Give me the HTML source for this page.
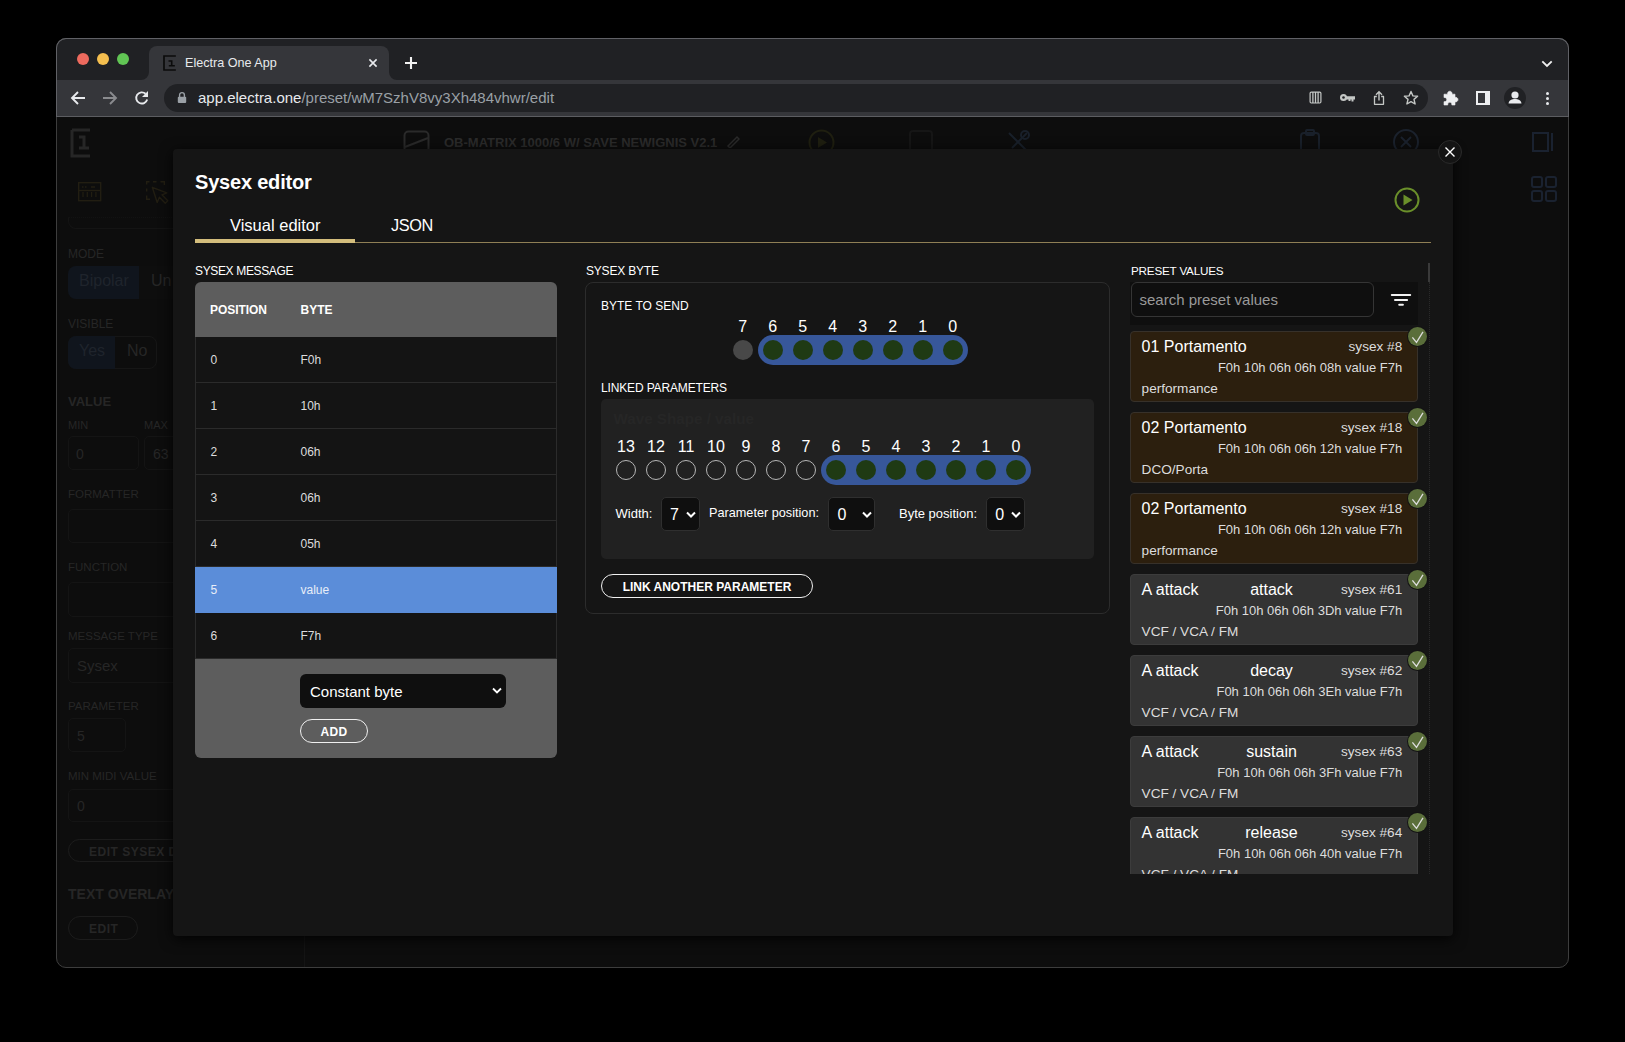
<!DOCTYPE html><html><head><meta charset="utf-8"><style>
html,body{margin:0;padding:0;}
body{width:1625px;height:1042px;background:#000;position:relative;overflow:hidden;font-family:"Liberation Sans", sans-serif;}
.t{position:absolute;line-height:1;white-space:nowrap;}
.r{position:absolute;box-sizing:border-box;}
</style></head><body>

<div class="r" style="left:56px;top:38px;width:1513px;height:930px;border-radius:10px;overflow:hidden;background:#0d0d0d;">
</div>
<div class="r" style="left:56px;top:38px;width:1513px;height:42px;background:#202124;border-radius:0px;border-radius:10px 10px 0 0;"></div>
<div class="r" style="left:56px;top:80px;width:1513px;height:36px;background:#35363a;border-radius:0px;"></div>
<div class="r" style="left:56px;top:116px;width:1513px;height:1px;background:#5c5d61;border-radius:0px;"></div>
<div class="r" style="left:149px;top:46px;width:240px;height:34px;background:#35363a;border-radius:0px;border-radius:8px 8px 0 0;"></div>
<svg class="r" style="left:141px;top:72px;" width="8" height="8" viewBox="0 0 8 8"><path d="M8 0 V8 H0 A8 8 0 0 0 8 0Z" fill="#35363a"/></svg>
<svg class="r" style="left:389px;top:72px;" width="8" height="8" viewBox="0 0 8 8"><path d="M0 0 V8 H8 A8 8 0 0 1 0 0Z" fill="#35363a"/></svg>
<div class="r" style="left:77px;top:53px;width:12px;height:12px;background:#ed6a5e;border-radius:6px;"></div>
<div class="r" style="left:97px;top:53px;width:12px;height:12px;background:#f5bf4f;border-radius:6px;"></div>
<div class="r" style="left:117px;top:53px;width:12px;height:12px;background:#61c554;border-radius:6px;"></div>
<svg class="r" style="left:163px;top:55px;" width="13" height="17" viewBox="0 0 13 17"><path d="M12 1 H1 V15 H12" stroke="#0b0b0b" stroke-width="1.7" fill="none" stroke-linecap="square"/><path d="M5.5 6 H8.7 V10.8 M5.8 10.8 H11.8" stroke="#0b0b0b" stroke-width="1.6" fill="none"/></svg>
<div class="t" style="left:185px;top:57.33px;font-size:12.6px;color:#e8eaed;font-weight:400;">Electra One App</div>
<svg class="r" style="left:367px;top:57px;" width="12" height="12" viewBox="0 0 12 12"><path d="M2.4 2.4 L9.6 9.6 M9.6 2.4 L2.4 9.6" stroke="#e8eaed" stroke-width="1.6"/></svg>
<svg class="r" style="left:404px;top:56.2px;" width="14" height="14" viewBox="0 0 14 14"><path d="M7 1 V13 M1 7 H13" stroke="#f2f2f2" stroke-width="2.1"/></svg>
<svg class="r" style="left:1540px;top:58.5px;" width="14" height="10" viewBox="0 0 14 10"><path d="M2.3 2.3 L7 7 L11.7 2.3" stroke="#f0f0f0" stroke-width="1.8" fill="none"/></svg>
<svg class="r" style="left:69px;top:89px;" width="18" height="18" viewBox="0 0 18 18"><path d="M16 9 H3 M9 3 L3 9 L9 15" stroke="#e8eaed" stroke-width="1.9" fill="none"/></svg>
<svg class="r" style="left:101px;top:89px;" width="18" height="18" viewBox="0 0 18 18"><path d="M2 9 H15 M9 3 L15 9 L9 15" stroke="#8a8b8e" stroke-width="1.9" fill="none"/></svg>
<svg class="r" style="left:133px;top:89px;" width="18" height="18" viewBox="0 0 18 18"><path d="M14.2 10.5 A5.6 5.6 0 1 1 12.6 4.8" stroke="#e8eaed" stroke-width="1.9" fill="none"/><path d="M15 2 V8 H9 Z" fill="#e8eaed"/></svg>
<div class="r" style="left:164px;top:84px;width:1264px;height:28px;background:#202124;border-radius:14px;"></div>
<svg class="r" style="left:177px;top:91px;" width="10" height="13" viewBox="0 0 10 13"><rect x="0.8" y="5.8" width="8.4" height="6.2" rx="1" fill="#9aa0a6"/><path d="M2.6 6 V4 A2.4 2.4 0 0 1 7.4 4 V6" stroke="#9aa0a6" stroke-width="1.4" fill="none"/></svg>
<div class="t" style="left:198px;top:90.30px;font-size:15px;color:#e8eaed;font-weight:400;"><span style="color:#e8eaed">app.electra.one</span><span style="color:#9aa0a6">/preset/wM7SzhV8vy3Xh484vhwr/edit</span></div>
<svg class="r" style="left:1308.5px;top:91.3px;" width="13" height="13" viewBox="0 0 13 13"><rect x="1.1" y="1.1" width="10.8" height="10.9" rx="1.2" stroke="#c4c7c5" stroke-width="1.2" fill="none"/><path d="M3.9 1 V12 M6.5 1 V12 M9.1 1 V12" stroke="#c4c7c5" stroke-width="1.3"/></svg>
<svg class="r" style="left:1339px;top:91px;" width="17" height="14" viewBox="0 0 17 14"><circle cx="4.5" cy="6.5" r="3.5" fill="#c4c7c5"/><circle cx="4.5" cy="6.5" r="1.3" fill="#202124"/><path d="M7 5.3 H16 V8.6 H14.5 V10.5 H12.5 V8.6 H11.5 V10 H9.5 V8.6 H7 Z" fill="#c4c7c5"/></svg>
<svg class="r" style="left:1372px;top:90px;" width="14" height="16" viewBox="0 0 14 16"><path d="M7 10.5 V2 M4 4.8 L7 1.8 L10 4.8" stroke="#c4c7c5" stroke-width="1.4" fill="none"/><path d="M4.8 6.5 H2.5 V14.3 H11.5 V6.5 H9.2" stroke="#c4c7c5" stroke-width="1.3" fill="none" stroke-linejoin="round"/></svg>
<svg class="r" style="left:1403px;top:90px;" width="16" height="16" viewBox="0 0 16 16"><path d="M8 1.5 L9.9 5.9 L14.6 6.3 L11 9.4 L12.1 14 L8 11.6 L3.9 14 L5 9.4 L1.4 6.3 L6.1 5.9 Z" stroke="#c4c7c5" stroke-width="1.4" fill="none" stroke-linejoin="round"/></svg>
<svg class="r" style="left:1442px;top:90px;" width="18" height="17" viewBox="0 0 18 17"><path d="M2 4.2 H5.6 A2.3 2.3 0 1 1 10 4.2 H13 V7.4 A2.3 2.3 0 1 1 13 11.8 V15 H9.8 A2.1 2.1 0 1 0 5.8 15 H2 V11.6 A2.1 2.1 0 1 0 2 7.6 Z" fill="#eeeff1" stroke="#eeeff1" stroke-width="0.6" stroke-linejoin="round"/></svg>
<svg class="r" style="left:1476px;top:91px;" width="14" height="14" viewBox="0 0 14 14"><rect x="1" y="1" width="12" height="12" stroke="#eeeff1" stroke-width="2" fill="none"/><rect x="9" y="1" width="4" height="12" fill="#eeeff1"/></svg>
<div class="r" style="left:1504px;top:87px;width:22px;height:22px;background:#202124;border-radius:11px;"></div>
<svg class="r" style="left:1504px;top:87px;" width="22" height="22" viewBox="0 0 22 22"><circle cx="11" cy="8" r="3.6" fill="#e8eaed"/><path d="M4.5 16.5 C5 13 8 12 11 12 C14 12 17 13 17.5 16.5 Z" fill="#e8eaed"/></svg>
<div class="r" style="left:1546px;top:91.9px;width:3.2px;height:3.2px;background:#e8eaed;border-radius:2px;"></div>
<div class="r" style="left:1546px;top:96.9px;width:3.2px;height:3.2px;background:#e8eaed;border-radius:2px;"></div>
<div class="r" style="left:1546px;top:101.9px;width:3.2px;height:3.2px;background:#e8eaed;border-radius:2px;"></div>
<div class="r" style="left:56px;top:117px;width:1513px;height:51px;background:#0d0d0d;border-radius:0px;"></div>
<div class="r" style="left:56px;top:168px;width:248px;height:1px;background:#131313;border-radius:0px;"></div>
<div class="r" style="left:56px;top:168px;width:1513px;height:799px;background:#0d0d0d;border-radius:0px;border-radius:0 0 10px 10px;"></div>
<div class="r" style="left:304px;top:168px;width:1px;height:799px;background:#141414;border-radius:0px;"></div>
<svg class="r" style="left:70px;top:128px;" width="22" height="30" viewBox="0 0 22 30"><path d="M2 2 H20 M2 2 V28 H20" stroke="#262626" stroke-width="3" fill="none"/><path d="M9 9 H14 V21 M9 20 H19" stroke="#262626" stroke-width="3" fill="none"/></svg>
<svg class="r" style="left:77px;top:181px;" width="26" height="22" viewBox="0 0 26 22"><rect x="1.7" y="1.7" width="22" height="18" stroke="#221e12" stroke-width="1.4" fill="none"/><path d="M1.7 9.5 H23.7" stroke="#221e12" stroke-width="1.4"/><path d="M6 11 V16 M10.3 11 V16 M14.6 11 V16 M18.9 11 V16" stroke="#221e12" stroke-width="1.2"/><path d="M5 6 H6.5 M8 6 H9.5 M14 6 H18" stroke="#221e12" stroke-width="1.3"/></svg>
<svg class="r" style="left:144px;top:179px;" width="28" height="28" viewBox="0 0 28 28"><path d="M5.5 2.7 H2.7 V5.5 M9 2.7 H12.5 M16.5 2.7 H20.3 V6 M2.7 9.5 V12.5 M2.7 16.5 V20.3 H6" stroke="#221e12" stroke-width="1.4" fill="none"/><path d="M8.3 8.3 L22.8 13.8 L18 15.8 L23.8 21.8 L21.3 24.2 L15.4 18.2 L13.2 23.5 Z" stroke="#221e12" stroke-width="1.4" fill="none" stroke-linejoin="round"/></svg>
<div class="r" style="left:68px;top:217px;width:236px;height:12px;background:none;border-radius:8px;border:1px solid #141414;border-top:1px dotted #121212;border-radius:0 0 8px 8px;"></div>
<div class="t" style="left:68px;top:247.84px;font-size:12px;color:#262626;font-weight:400;">MODE</div>
<div class="r" style="left:68px;top:266px;width:108px;height:33px;background:#10151d;border-radius:8px;"></div>
<div class="r" style="left:139px;top:266px;width:37px;height:33px;background:#0e0e0e;border-radius:0px;"></div>
<div class="t" style="left:79px;top:273.46px;font-size:16px;color:#1f242c;font-weight:400;">Bipolar</div>
<div class="t" style="left:151px;top:273.46px;font-size:16px;color:#262626;font-weight:400;">Un</div>
<div class="t" style="left:68px;top:317.84px;font-size:12px;color:#262626;font-weight:400;">VISIBLE</div>
<div class="r" style="left:68px;top:336px;width:89px;height:33px;background:none;border-radius:8px;border:1px solid #161616;"></div>
<div class="r" style="left:68px;top:336px;width:47px;height:33px;background:#10151d;border-radius:0px;border-radius:8px 0 0 8px;"></div>
<div class="t" style="left:79px;top:343.46px;font-size:16px;color:#1f242c;font-weight:400;">Yes</div>
<div class="t" style="left:127px;top:343.46px;font-size:16px;color:#262626;font-weight:400;">No</div>
<div class="t" style="left:68px;top:395.00px;font-size:13px;color:#262626;font-weight:700;">VALUE</div>
<div class="t" style="left:68px;top:419.69px;font-size:11px;color:#262626;font-weight:400;">MIN</div>
<div class="t" style="left:144px;top:419.69px;font-size:11px;color:#262626;font-weight:400;">MAX</div>
<div class="r" style="left:68px;top:436px;width:71px;height:34px;background:none;border-radius:5px;border:1px solid #141414;"></div>
<div class="r" style="left:144px;top:436px;width:40px;height:34px;background:none;border-radius:5px;border:1px solid #141414;"></div>
<div class="t" style="left:76px;top:447.15px;font-size:14px;color:#262626;font-weight:400;">0</div>
<div class="t" style="left:153px;top:447.15px;font-size:14px;color:#262626;font-weight:400;">63</div>
<div class="t" style="left:68px;top:489.27px;font-size:11.5px;color:#262626;font-weight:400;">FORMATTER</div>
<div class="r" style="left:68px;top:509px;width:120px;height:34px;background:none;border-radius:5px;border:1px solid #141414;"></div>
<div class="t" style="left:68px;top:562.27px;font-size:11.5px;color:#262626;font-weight:400;">FUNCTION</div>
<div class="r" style="left:68px;top:582px;width:120px;height:35px;background:none;border-radius:5px;border:1px solid #141414;"></div>
<div class="t" style="left:68px;top:631.27px;font-size:11.5px;color:#262626;font-weight:400;">MESSAGE TYPE</div>
<div class="r" style="left:68px;top:648px;width:120px;height:35px;background:none;border-radius:5px;border:1px solid #141414;"></div>
<div class="t" style="left:77px;top:658.30px;font-size:15px;color:#262626;font-weight:400;">Sysex</div>
<div class="t" style="left:68px;top:701.27px;font-size:11.5px;color:#262626;font-weight:400;">PARAMETER</div>
<div class="r" style="left:68px;top:718px;width:58px;height:34px;background:none;border-radius:5px;border:1px solid #141414;"></div>
<div class="t" style="left:77px;top:729.15px;font-size:14px;color:#262626;font-weight:400;">5</div>
<div class="t" style="left:68px;top:771.27px;font-size:11.5px;color:#262626;font-weight:400;">MIN MIDI VALUE</div>
<div class="r" style="left:68px;top:789px;width:120px;height:33px;background:none;border-radius:5px;border:1px solid #141414;"></div>
<div class="t" style="left:77px;top:799.15px;font-size:14px;color:#262626;font-weight:400;">0</div>
<div class="r" style="left:68px;top:839px;width:140px;height:23px;background:none;border-radius:12px;border:1px solid #1c1c1c;"></div>
<div class="t" style="left:89px;top:845.84px;font-size:12px;color:#262626;font-weight:700;letter-spacing:0.5px;">EDIT SYSEX DATA</div>
<div class="t" style="left:68px;top:887.15px;font-size:14px;color:#262626;font-weight:700;">TEXT OVERLAY</div>
<div class="r" style="left:68px;top:916px;width:70px;height:24px;background:none;border-radius:12px;border:1px solid #1c1c1c;"></div>
<div class="t" style="left:89px;top:922.84px;font-size:12px;color:#262626;font-weight:700;letter-spacing:0.5px;">EDIT</div>
<svg class="r" style="left:403px;top:130px;" width="27" height="24" viewBox="0 0 27 24"><rect x="1.5" y="1.5" width="24" height="21" rx="4" stroke="#2a2a2a" stroke-width="2" fill="none"/><path d="M2 17 L25 8" stroke="#2a2a2a" stroke-width="2"/></svg>
<div class="t" style="left:444px;top:136.00px;font-size:13px;color:#2b2b2b;font-weight:700;">OB-MATRIX 1000/6 W/ SAVE NEWIGNIS V2.1</div>
<svg class="r" style="left:726px;top:134px;" width="14" height="14" viewBox="0 0 14 14"><path d="M2 12 L11 3 L13 5 L4 14 Z" stroke="#2a2a2a" stroke-width="1.5" fill="none"/></svg>
<svg class="r" style="left:808px;top:129px;" width="27" height="27" viewBox="0 0 27 27"><circle cx="13.5" cy="13.5" r="12" stroke="#1f1f10" stroke-width="2" fill="none"/><path d="M10 8 L19 13.5 L10 19 Z" fill="#1f1f10"/></svg>
<svg class="r" style="left:908px;top:129px;" width="26" height="26" viewBox="0 0 26 26"><rect x="2" y="2" width="22" height="22" rx="3" stroke="#161616" stroke-width="2" fill="none"/></svg>
<svg class="r" style="left:1004px;top:128px;" width="28" height="28" viewBox="0 0 28 28"><path d="M5 5 L23 23 M23 5 L8 20" stroke="#19202a" stroke-width="2"/><circle cx="21" cy="7" r="4" stroke="#19202a" stroke-width="2" fill="none"/></svg>
<svg class="r" style="left:1298px;top:128px;" width="26" height="28" viewBox="0 0 26 28"><rect x="3" y="5" width="18" height="22" rx="3" stroke="#19202a" stroke-width="2" fill="none"/><rect x="8" y="2" width="8" height="5" rx="1" stroke="#19202a" stroke-width="2" fill="none"/></svg>
<svg class="r" style="left:1392px;top:128px;" width="28" height="28" viewBox="0 0 28 28"><circle cx="14" cy="14" r="12" stroke="#1b222d" stroke-width="2" fill="none"/><path d="M9 9 L19 19 M19 9 L9 19" stroke="#1b222d" stroke-width="2"/></svg>
<svg class="r" style="left:1532px;top:132px;" width="22" height="20" viewBox="0 0 22 20"><rect x="1" y="1" width="15" height="18" stroke="#1a2230" stroke-width="2" fill="none"/><path d="M20 1 V19" stroke="#1a2230" stroke-width="2"/></svg>
<svg class="r" style="left:1531px;top:176px;" width="26" height="26" viewBox="0 0 26 26"><rect x="1" y="1" width="10" height="10" rx="2" stroke="#1a2230" stroke-width="2" fill="none"/><rect x="15" y="1" width="10" height="10" rx="2" stroke="#1a2230" stroke-width="2" fill="none"/><rect x="1" y="15" width="10" height="10" rx="2" stroke="#1a2230" stroke-width="2" fill="none"/><rect x="15" y="15" width="10" height="10" rx="2" stroke="#1a2230" stroke-width="2" fill="none"/></svg>
<div class="r" style="left:56px;top:38px;width:1513px;height:930px;border-radius:10px;border:1px solid #3d3d3d;"></div>
<div class="r" style="left:56px;top:38px;width:1513px;height:79px;border-radius:10px 10px 0 0;border:1px solid #606166;border-bottom:none;"></div>
<div class="r" style="left:172.8px;top:149px;width:1280.2px;height:786.7px;background:#151515;border-radius:4px;box-shadow:0 3px 14px rgba(0,0,0,0.85);"></div>
<div class="t" style="left:195px;top:172.07px;font-size:20px;color:#ffffff;font-weight:700;letter-spacing:-0.2px;">Sysex editor</div>
<div class="r" style="left:1438px;top:140px;width:24px;height:24px;background:#141414;border-radius:12px;border:1px solid #2a2a2a;"></div>
<svg class="r" style="left:1438px;top:140px;" width="24" height="24" viewBox="0 0 24 24"><path d="M7.5 7.5 L16.5 16.5 M16.5 7.5 L7.5 16.5" stroke="#ffffff" stroke-width="1.4"/></svg>
<svg class="r" style="left:1394px;top:187px;" width="26" height="26" viewBox="0 0 26 26"><circle cx="13" cy="13" r="11.5" stroke="#6a8f2a" stroke-width="2" fill="none"/><path d="M9.5 7.5 L18.5 13 L9.5 18.5 Z" fill="#6a8f2a"/></svg>
<div class="t" style="left:230px;top:217.03px;font-size:16.5px;color:#ffffff;font-weight:400;">Visual editor</div>
<div class="t" style="left:391px;top:217.20px;font-size:16.3px;color:#ffffff;font-weight:400;letter-spacing:-0.4px;">JSON</div>
<div class="r" style="left:195px;top:242px;width:1236px;height:1px;background:#8f7f55;border-radius:0px;"></div>
<div class="r" style="left:195px;top:239px;width:160px;height:4px;background:#d3bd7c;border-radius:0px;"></div>
<div class="t" style="left:195px;top:264.84px;font-size:12px;color:#ffffff;font-weight:400;letter-spacing:-0.35px;">SYSEX MESSAGE</div>
<div class="t" style="left:586px;top:265.34px;font-size:12px;color:#ffffff;font-weight:400;letter-spacing:-0.2px;">SYSEX BYTE</div>
<div class="t" style="left:1131px;top:265.10px;font-size:11.7px;color:#ffffff;font-weight:400;letter-spacing:-0.2px;">PRESET VALUES</div>
<div class="r" style="left:195px;top:282px;width:362px;height:55px;background:#5d5d5d;border-radius:0px;border-radius:6px 6px 0 0;"></div>
<div class="t" style="left:210px;top:304.04px;font-size:12px;color:#ffffff;font-weight:700;letter-spacing:-0.05px;">POSITION</div>
<div class="t" style="left:300.5px;top:304.04px;font-size:12px;color:#ffffff;font-weight:700;">BYTE</div>
<div class="r" style="left:195px;top:337px;width:362px;height:46px;background:#141414;border-radius:0px;border-left:1px solid #2b2b2b;border-right:1px solid #2b2b2b;border-bottom:1px solid #2b2b2b;"></div>
<div class="t" style="left:210.5px;top:353.84px;font-size:12px;color:#dddddd;font-weight:400;">0</div>
<div class="t" style="left:300.5px;top:353.84px;font-size:12px;color:#dddddd;font-weight:400;">F0h</div>
<div class="r" style="left:195px;top:383px;width:362px;height:46px;background:#141414;border-radius:0px;border-left:1px solid #2b2b2b;border-right:1px solid #2b2b2b;border-bottom:1px solid #2b2b2b;"></div>
<div class="t" style="left:210.5px;top:399.84px;font-size:12px;color:#dddddd;font-weight:400;">1</div>
<div class="t" style="left:300.5px;top:399.84px;font-size:12px;color:#dddddd;font-weight:400;">10h</div>
<div class="r" style="left:195px;top:429px;width:362px;height:46px;background:#141414;border-radius:0px;border-left:1px solid #2b2b2b;border-right:1px solid #2b2b2b;border-bottom:1px solid #2b2b2b;"></div>
<div class="t" style="left:210.5px;top:445.84px;font-size:12px;color:#dddddd;font-weight:400;">2</div>
<div class="t" style="left:300.5px;top:445.84px;font-size:12px;color:#dddddd;font-weight:400;">06h</div>
<div class="r" style="left:195px;top:475px;width:362px;height:46px;background:#141414;border-radius:0px;border-left:1px solid #2b2b2b;border-right:1px solid #2b2b2b;border-bottom:1px solid #2b2b2b;"></div>
<div class="t" style="left:210.5px;top:491.84px;font-size:12px;color:#dddddd;font-weight:400;">3</div>
<div class="t" style="left:300.5px;top:491.84px;font-size:12px;color:#dddddd;font-weight:400;">06h</div>
<div class="r" style="left:195px;top:521px;width:362px;height:46px;background:#141414;border-radius:0px;border-left:1px solid #2b2b2b;border-right:1px solid #2b2b2b;border-bottom:1px solid #2b2b2b;"></div>
<div class="t" style="left:210.5px;top:537.84px;font-size:12px;color:#dddddd;font-weight:400;">4</div>
<div class="t" style="left:300.5px;top:537.84px;font-size:12px;color:#dddddd;font-weight:400;">05h</div>
<div class="r" style="left:195px;top:567px;width:362px;height:46px;background:#5b8dd9;border-radius:0px;"></div>
<div class="t" style="left:210.5px;top:583.84px;font-size:12px;color:#e8eef8;font-weight:400;">5</div>
<div class="t" style="left:300.5px;top:583.84px;font-size:12px;color:#e8eef8;font-weight:400;">value</div>
<div class="r" style="left:195px;top:613px;width:362px;height:46px;background:#141414;border-radius:0px;border-left:1px solid #2b2b2b;border-right:1px solid #2b2b2b;border-bottom:1px solid #2b2b2b;"></div>
<div class="t" style="left:210.5px;top:629.84px;font-size:12px;color:#dddddd;font-weight:400;">6</div>
<div class="t" style="left:300.5px;top:629.84px;font-size:12px;color:#dddddd;font-weight:400;">F7h</div>
<div class="r" style="left:195px;top:659px;width:362px;height:99px;background:#5d5d5d;border-radius:0px;border-radius:0 0 6px 6px;"></div>
<div class="r" style="left:300px;top:674.2px;width:206px;height:34.3px;background:#0f0f0f;border-radius:6px;"></div>
<div class="t" style="left:310px;top:684.30px;font-size:15px;color:#ffffff;font-weight:400;">Constant byte</div>
<svg class="r" style="left:491px;top:686px;" width="12" height="10" viewBox="0 0 12 10"><path d="M2 2.5 L6 6.5 L10 2.5" stroke="#ffffff" stroke-width="1.8" fill="none"/></svg>
<div class="r" style="left:300px;top:719.2px;width:68px;height:23.8px;background:none;border-radius:12px;border:1.5px solid #f0f0f0;"></div>
<div class="t" style="left:34px;width:600px;text-align:center;top:725.84px;font-size:12px;color:#ffffff;font-weight:700;letter-spacing:0.3px;">ADD</div>
<div class="r" style="left:585px;top:282px;width:525px;height:331.5px;background:none;border-radius:8px;border:1px solid #2c2c2c;"></div>
<div class="t" style="left:601px;top:300.34px;font-size:12px;color:#ffffff;font-weight:400;letter-spacing:0.0px;">BYTE TO SEND</div>
<div class="t" style="left:442.70000000000005px;width:600px;text-align:center;top:318.86px;font-size:16px;color:#ffffff;font-weight:400;">7</div>
<div class="t" style="left:472.70000000000005px;width:600px;text-align:center;top:318.86px;font-size:16px;color:#ffffff;font-weight:400;">6</div>
<div class="t" style="left:502.70000000000005px;width:600px;text-align:center;top:318.86px;font-size:16px;color:#ffffff;font-weight:400;">5</div>
<div class="t" style="left:532.7px;width:600px;text-align:center;top:318.86px;font-size:16px;color:#ffffff;font-weight:400;">4</div>
<div class="t" style="left:562.7px;width:600px;text-align:center;top:318.86px;font-size:16px;color:#ffffff;font-weight:400;">3</div>
<div class="t" style="left:592.7px;width:600px;text-align:center;top:318.86px;font-size:16px;color:#ffffff;font-weight:400;">2</div>
<div class="t" style="left:622.7px;width:600px;text-align:center;top:318.86px;font-size:16px;color:#ffffff;font-weight:400;">1</div>
<div class="t" style="left:652.7px;width:600px;text-align:center;top:318.86px;font-size:16px;color:#ffffff;font-weight:400;">0</div>
<div class="r" style="left:733px;top:340px;width:20px;height:20px;background:#484848;border-radius:10px;"></div>
<div class="r" style="left:758px;top:335px;width:210px;height:30px;background:#37579a;border-radius:15px;"></div>
<div class="r" style="left:763px;top:340px;width:20px;height:20px;background:#1f3a14;border-radius:10px;"></div>
<div class="r" style="left:793px;top:340px;width:20px;height:20px;background:#1f3a14;border-radius:10px;"></div>
<div class="r" style="left:823px;top:340px;width:20px;height:20px;background:#1f3a14;border-radius:10px;"></div>
<div class="r" style="left:853px;top:340px;width:20px;height:20px;background:#1f3a14;border-radius:10px;"></div>
<div class="r" style="left:883px;top:340px;width:20px;height:20px;background:#1f3a14;border-radius:10px;"></div>
<div class="r" style="left:913px;top:340px;width:20px;height:20px;background:#1f3a14;border-radius:10px;"></div>
<div class="r" style="left:943px;top:340px;width:20px;height:20px;background:#1f3a14;border-radius:10px;"></div>
<div class="t" style="left:601px;top:382.14px;font-size:12px;color:#ffffff;font-weight:400;letter-spacing:-0.15px;">LINKED PARAMETERS</div>
<div class="r" style="left:601px;top:399px;width:493px;height:160px;background:#212121;border-radius:5px;"></div>
<div class="t" style="left:613.5px;top:410.63px;font-size:15.2px;color:#262626;font-weight:700;">Wave Shape / value</div>
<div class="t" style="left:326px;width:600px;text-align:center;top:438.56px;font-size:16px;color:#ffffff;font-weight:400;">13</div>
<div class="t" style="left:356px;width:600px;text-align:center;top:438.56px;font-size:16px;color:#ffffff;font-weight:400;">12</div>
<div class="t" style="left:386px;width:600px;text-align:center;top:438.56px;font-size:16px;color:#ffffff;font-weight:400;">11</div>
<div class="t" style="left:416px;width:600px;text-align:center;top:438.56px;font-size:16px;color:#ffffff;font-weight:400;">10</div>
<div class="t" style="left:446px;width:600px;text-align:center;top:438.56px;font-size:16px;color:#ffffff;font-weight:400;">9</div>
<div class="t" style="left:476px;width:600px;text-align:center;top:438.56px;font-size:16px;color:#ffffff;font-weight:400;">8</div>
<div class="t" style="left:506px;width:600px;text-align:center;top:438.56px;font-size:16px;color:#ffffff;font-weight:400;">7</div>
<div class="t" style="left:536px;width:600px;text-align:center;top:438.56px;font-size:16px;color:#ffffff;font-weight:400;">6</div>
<div class="t" style="left:566px;width:600px;text-align:center;top:438.56px;font-size:16px;color:#ffffff;font-weight:400;">5</div>
<div class="t" style="left:596px;width:600px;text-align:center;top:438.56px;font-size:16px;color:#ffffff;font-weight:400;">4</div>
<div class="t" style="left:626px;width:600px;text-align:center;top:438.56px;font-size:16px;color:#ffffff;font-weight:400;">3</div>
<div class="t" style="left:656px;width:600px;text-align:center;top:438.56px;font-size:16px;color:#ffffff;font-weight:400;">2</div>
<div class="t" style="left:686px;width:600px;text-align:center;top:438.56px;font-size:16px;color:#ffffff;font-weight:400;">1</div>
<div class="t" style="left:716px;width:600px;text-align:center;top:438.56px;font-size:16px;color:#ffffff;font-weight:400;">0</div>
<div class="r" style="left:821px;top:455px;width:210px;height:30px;background:#37579a;border-radius:15px;"></div>
<div class="r" style="left:616px;top:460px;width:20px;height:20px;background:none;border-radius:10px;border:1px solid #b5b5b5;"></div>
<div class="r" style="left:646px;top:460px;width:20px;height:20px;background:none;border-radius:10px;border:1px solid #b5b5b5;"></div>
<div class="r" style="left:676px;top:460px;width:20px;height:20px;background:none;border-radius:10px;border:1px solid #b5b5b5;"></div>
<div class="r" style="left:706px;top:460px;width:20px;height:20px;background:none;border-radius:10px;border:1px solid #b5b5b5;"></div>
<div class="r" style="left:736px;top:460px;width:20px;height:20px;background:none;border-radius:10px;border:1px solid #b5b5b5;"></div>
<div class="r" style="left:766px;top:460px;width:20px;height:20px;background:none;border-radius:10px;border:1px solid #b5b5b5;"></div>
<div class="r" style="left:796px;top:460px;width:20px;height:20px;background:none;border-radius:10px;border:1px solid #b5b5b5;"></div>
<div class="r" style="left:826px;top:460px;width:20px;height:20px;background:#1f3a14;border-radius:10px;"></div>
<div class="r" style="left:856px;top:460px;width:20px;height:20px;background:#1f3a14;border-radius:10px;"></div>
<div class="r" style="left:886px;top:460px;width:20px;height:20px;background:#1f3a14;border-radius:10px;"></div>
<div class="r" style="left:916px;top:460px;width:20px;height:20px;background:#1f3a14;border-radius:10px;"></div>
<div class="r" style="left:946px;top:460px;width:20px;height:20px;background:#1f3a14;border-radius:10px;"></div>
<div class="r" style="left:976px;top:460px;width:20px;height:20px;background:#1f3a14;border-radius:10px;"></div>
<div class="r" style="left:1006px;top:460px;width:20px;height:20px;background:#1f3a14;border-radius:10px;"></div>
<div class="t" style="left:615.6px;top:506.50px;font-size:13px;color:#ffffff;font-weight:400;">Width:</div>
<div class="r" style="left:661px;top:497px;width:39px;height:34px;background:#0f0f0f;border-radius:5px;border:1px solid #2f2f2f;"></div>
<div class="t" style="left:670px;top:507.26px;font-size:16px;color:#ffffff;font-weight:400;">7</div>
<svg class="r" style="left:684.5px;top:510px;" width="12" height="10" viewBox="0 0 12 10"><path d="M2 2.5 L6 6.5 L10 2.5" stroke="#ffffff" stroke-width="2" fill="none"/></svg>
<div class="t" style="left:709px;top:506.75px;font-size:12.7px;color:#ffffff;font-weight:400;">Parameter position:</div>
<div class="r" style="left:828px;top:497px;width:47px;height:34px;background:#0f0f0f;border-radius:5px;border:1px solid #2f2f2f;"></div>
<div class="t" style="left:837.5px;top:507.46px;font-size:16px;color:#ffffff;font-weight:400;">0</div>
<svg class="r" style="left:860.5px;top:510px;" width="12" height="10" viewBox="0 0 12 10"><path d="M2 2.5 L6 6.5 L10 2.5" stroke="#ffffff" stroke-width="2" fill="none"/></svg>
<div class="t" style="left:899px;top:506.50px;font-size:13px;color:#ffffff;font-weight:400;">Byte position:</div>
<div class="r" style="left:986px;top:497px;width:39px;height:34px;background:#0f0f0f;border-radius:5px;border:1px solid #2f2f2f;"></div>
<div class="t" style="left:995.3px;top:507.46px;font-size:16px;color:#ffffff;font-weight:400;">0</div>
<svg class="r" style="left:1009.6px;top:510px;" width="12" height="10" viewBox="0 0 12 10"><path d="M2 2.5 L6 6.5 L10 2.5" stroke="#ffffff" stroke-width="2" fill="none"/></svg>
<div class="r" style="left:601px;top:574.2px;width:212px;height:23.8px;background:none;border-radius:12px;border:1.5px solid #f0f0f0;"></div>
<div class="t" style="left:407px;width:600px;text-align:center;top:580.84px;font-size:12px;color:#ffffff;font-weight:700;letter-spacing:0.0px;">LINK ANOTHER PARAMETER</div>
<div class="r" style="left:1130px;top:282px;width:288px;height:43px;background:#0f0f0f;border-radius:0px;"></div>
<div class="r" style="left:1130.5px;top:282px;width:243.5px;height:34.5px;background:#0f0f0f;border-radius:6px;border:1px solid #353535;"></div>
<div class="t" style="left:1139.5px;top:292.30px;font-size:15px;color:#9a9a9a;font-weight:400;">search preset values</div>
<svg class="r" style="left:1390px;top:292px;" width="22" height="16" viewBox="0 0 22 16"><path d="M1.8 3 H20.2 M5 8 H17.1 M9.2 12.8 H12.9" stroke="#f2f2f2" stroke-width="2" stroke-linecap="round"/></svg>
<div class="r" style="left:1428px;top:263px;width:2px;height:18.5px;background:#3a3a3a;border-radius:0px;"></div>
<div class="r" style="left:1429px;top:282px;width:1px;height:592px;background:none;border-radius:0px;border-left:1px dotted #2a2a2a;"></div>
<div class="r" style="left:1130px;top:325px;width:300px;height:549px;overflow:hidden;">
<div class="r" style="left:-0.20000000000004547px;top:6px;width:288px;height:70.5px;background:#2c1f0e;border-radius:4px;border:1px solid #37312a;"></div>
<div class="t" style="left:11.599999999999909px;top:13.96px;font-size:16px;color:#ffffff;font-weight:400;">01 Portamento</div>
<div class="t" style="left:-327.79999999999995px;width:600px;text-align:right;top:14.99px;font-size:13.6px;color:#dddddd;font-weight:400;">sysex #8</div>
<div class="t" style="left:-327.79999999999995px;width:600px;text-align:right;top:36.00px;font-size:13px;color:#dddddd;font-weight:400;">F0h 10h 06h 06h 08h value F7h</div>
<div class="t" style="left:11.599999999999909px;top:56.99px;font-size:13.6px;color:#dddddd;font-weight:400;">performance</div>
<div class="r" style="left:-0.20000000000004547px;top:87px;width:288px;height:70.5px;background:#2c1f0e;border-radius:4px;border:1px solid #37312a;"></div>
<div class="t" style="left:11.599999999999909px;top:94.96px;font-size:16px;color:#ffffff;font-weight:400;">02 Portamento</div>
<div class="t" style="left:-327.79999999999995px;width:600px;text-align:right;top:95.99px;font-size:13.6px;color:#dddddd;font-weight:400;">sysex #18</div>
<div class="t" style="left:-327.79999999999995px;width:600px;text-align:right;top:117.00px;font-size:13px;color:#dddddd;font-weight:400;">F0h 10h 06h 06h 12h value F7h</div>
<div class="t" style="left:11.599999999999909px;top:137.99px;font-size:13.6px;color:#dddddd;font-weight:400;">DCO/Porta</div>
<div class="r" style="left:-0.20000000000004547px;top:168px;width:288px;height:70.5px;background:#2c1f0e;border-radius:4px;border:1px solid #37312a;"></div>
<div class="t" style="left:11.599999999999909px;top:175.96px;font-size:16px;color:#ffffff;font-weight:400;">02 Portamento</div>
<div class="t" style="left:-327.79999999999995px;width:600px;text-align:right;top:176.99px;font-size:13.6px;color:#dddddd;font-weight:400;">sysex #18</div>
<div class="t" style="left:-327.79999999999995px;width:600px;text-align:right;top:198.00px;font-size:13px;color:#dddddd;font-weight:400;">F0h 10h 06h 06h 12h value F7h</div>
<div class="t" style="left:11.599999999999909px;top:218.99px;font-size:13.6px;color:#dddddd;font-weight:400;">performance</div>
<div class="r" style="left:-0.20000000000004547px;top:249px;width:288px;height:70.5px;background:#333333;border-radius:4px;border:1px solid #3c3c3c;"></div>
<div class="t" style="left:11.599999999999909px;top:256.96px;font-size:16px;color:#ffffff;font-weight:400;">A attack</div>
<div class="t" style="left:-158.5px;width:600px;text-align:center;top:256.96px;font-size:16px;color:#ffffff;font-weight:400;">attack</div>
<div class="t" style="left:-327.79999999999995px;width:600px;text-align:right;top:257.99px;font-size:13.6px;color:#dddddd;font-weight:400;">sysex #61</div>
<div class="t" style="left:-327.79999999999995px;width:600px;text-align:right;top:279.00px;font-size:13px;color:#dddddd;font-weight:400;">F0h 10h 06h 06h 3Dh value F7h</div>
<div class="t" style="left:11.599999999999909px;top:299.99px;font-size:13.6px;color:#dddddd;font-weight:400;">VCF / VCA / FM</div>
<div class="r" style="left:-0.20000000000004547px;top:330px;width:288px;height:70.5px;background:#333333;border-radius:4px;border:1px solid #3c3c3c;"></div>
<div class="t" style="left:11.599999999999909px;top:337.96px;font-size:16px;color:#ffffff;font-weight:400;">A attack</div>
<div class="t" style="left:-158.5px;width:600px;text-align:center;top:337.96px;font-size:16px;color:#ffffff;font-weight:400;">decay</div>
<div class="t" style="left:-327.79999999999995px;width:600px;text-align:right;top:338.99px;font-size:13.6px;color:#dddddd;font-weight:400;">sysex #62</div>
<div class="t" style="left:-327.79999999999995px;width:600px;text-align:right;top:360.00px;font-size:13px;color:#dddddd;font-weight:400;">F0h 10h 06h 06h 3Eh value F7h</div>
<div class="t" style="left:11.599999999999909px;top:380.99px;font-size:13.6px;color:#dddddd;font-weight:400;">VCF / VCA / FM</div>
<div class="r" style="left:-0.20000000000004547px;top:411px;width:288px;height:70.5px;background:#333333;border-radius:4px;border:1px solid #3c3c3c;"></div>
<div class="t" style="left:11.599999999999909px;top:418.96px;font-size:16px;color:#ffffff;font-weight:400;">A attack</div>
<div class="t" style="left:-158.5px;width:600px;text-align:center;top:418.96px;font-size:16px;color:#ffffff;font-weight:400;">sustain</div>
<div class="t" style="left:-327.79999999999995px;width:600px;text-align:right;top:419.99px;font-size:13.6px;color:#dddddd;font-weight:400;">sysex #63</div>
<div class="t" style="left:-327.79999999999995px;width:600px;text-align:right;top:441.00px;font-size:13px;color:#dddddd;font-weight:400;">F0h 10h 06h 06h 3Fh value F7h</div>
<div class="t" style="left:11.599999999999909px;top:461.99px;font-size:13.6px;color:#dddddd;font-weight:400;">VCF / VCA / FM</div>
<div class="r" style="left:-0.20000000000004547px;top:492px;width:288px;height:70.5px;background:#333333;border-radius:4px;border:1px solid #3c3c3c;"></div>
<div class="t" style="left:11.599999999999909px;top:499.96px;font-size:16px;color:#ffffff;font-weight:400;">A attack</div>
<div class="t" style="left:-158.5px;width:600px;text-align:center;top:499.96px;font-size:16px;color:#ffffff;font-weight:400;">release</div>
<div class="t" style="left:-327.79999999999995px;width:600px;text-align:right;top:500.99px;font-size:13.6px;color:#dddddd;font-weight:400;">sysex #64</div>
<div class="t" style="left:-327.79999999999995px;width:600px;text-align:right;top:522.00px;font-size:13px;color:#dddddd;font-weight:400;">F0h 10h 06h 06h 40h value F7h</div>
<div class="t" style="left:11.599999999999909px;top:542.99px;font-size:13.6px;color:#dddddd;font-weight:400;">VCF / VCA / FM</div>
</div>
<div class="r" style="left:1406.8px;top:325.9px;width:21.2px;height:21.2px;background:#141414;border-radius:11px;"></div>
<div class="r" style="left:1408px;top:327.1px;width:18.8px;height:18.8px;background:#5a6e3a;border-radius:10px;"></div>
<svg class="r" style="left:1408px;top:326.5px;" width="19" height="19" viewBox="0 0 19 19"><path d="M4.4 10.3 L8.5 15.4 L15 4.9" stroke="#dddddd" stroke-width="1.3" fill="none"/></svg>
<div class="r" style="left:1406.8px;top:406.9px;width:21.2px;height:21.2px;background:#141414;border-radius:11px;"></div>
<div class="r" style="left:1408px;top:408.1px;width:18.8px;height:18.8px;background:#5a6e3a;border-radius:10px;"></div>
<svg class="r" style="left:1408px;top:407.5px;" width="19" height="19" viewBox="0 0 19 19"><path d="M4.4 10.3 L8.5 15.4 L15 4.9" stroke="#dddddd" stroke-width="1.3" fill="none"/></svg>
<div class="r" style="left:1406.8px;top:487.9px;width:21.2px;height:21.2px;background:#141414;border-radius:11px;"></div>
<div class="r" style="left:1408px;top:489.1px;width:18.8px;height:18.8px;background:#5a6e3a;border-radius:10px;"></div>
<svg class="r" style="left:1408px;top:488.5px;" width="19" height="19" viewBox="0 0 19 19"><path d="M4.4 10.3 L8.5 15.4 L15 4.9" stroke="#dddddd" stroke-width="1.3" fill="none"/></svg>
<div class="r" style="left:1406.8px;top:568.9px;width:21.2px;height:21.2px;background:#141414;border-radius:11px;"></div>
<div class="r" style="left:1408px;top:570.1px;width:18.8px;height:18.8px;background:#5a6e3a;border-radius:10px;"></div>
<svg class="r" style="left:1408px;top:569.5px;" width="19" height="19" viewBox="0 0 19 19"><path d="M4.4 10.3 L8.5 15.4 L15 4.9" stroke="#dddddd" stroke-width="1.3" fill="none"/></svg>
<div class="r" style="left:1406.8px;top:649.9px;width:21.2px;height:21.2px;background:#141414;border-radius:11px;"></div>
<div class="r" style="left:1408px;top:651.1px;width:18.8px;height:18.8px;background:#5a6e3a;border-radius:10px;"></div>
<svg class="r" style="left:1408px;top:650.5px;" width="19" height="19" viewBox="0 0 19 19"><path d="M4.4 10.3 L8.5 15.4 L15 4.9" stroke="#dddddd" stroke-width="1.3" fill="none"/></svg>
<div class="r" style="left:1406.8px;top:730.9px;width:21.2px;height:21.2px;background:#141414;border-radius:11px;"></div>
<div class="r" style="left:1408px;top:732.1px;width:18.8px;height:18.8px;background:#5a6e3a;border-radius:10px;"></div>
<svg class="r" style="left:1408px;top:731.5px;" width="19" height="19" viewBox="0 0 19 19"><path d="M4.4 10.3 L8.5 15.4 L15 4.9" stroke="#dddddd" stroke-width="1.3" fill="none"/></svg>
<div class="r" style="left:1406.8px;top:811.9px;width:21.2px;height:21.2px;background:#141414;border-radius:11px;"></div>
<div class="r" style="left:1408px;top:813.1px;width:18.8px;height:18.8px;background:#5a6e3a;border-radius:10px;"></div>
<svg class="r" style="left:1408px;top:812.5px;" width="19" height="19" viewBox="0 0 19 19"><path d="M4.4 10.3 L8.5 15.4 L15 4.9" stroke="#dddddd" stroke-width="1.3" fill="none"/></svg>
</body></html>
